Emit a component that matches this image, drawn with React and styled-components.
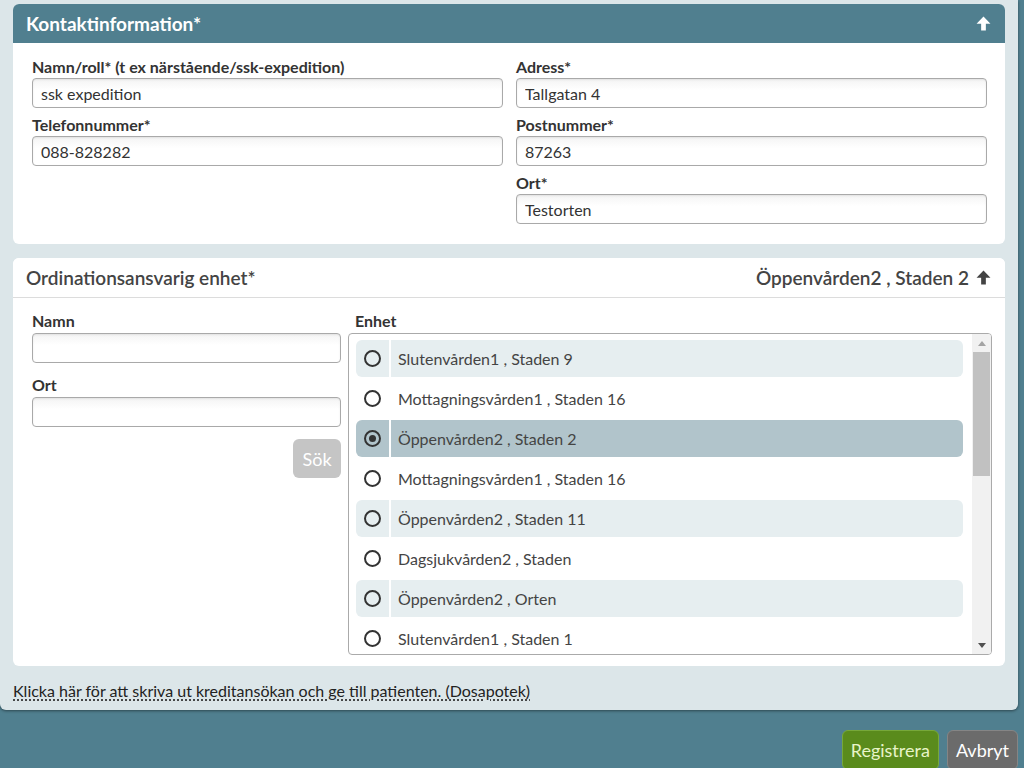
import styled, { createGlobalStyle } from "styled-components";

const units = [
  { name: "Slutenvården1 , Staden 9" },
  { name: "Mottagningsvården1 , Staden 16" },
  { name: "Öppenvården2 , Staden 2", selected: true },
  { name: "Mottagningsvården1 , Staden 16" },
  { name: "Öppenvården2 , Staden 11" },
  { name: "Dagsjukvården2 , Staden" },
  { name: "Öppenvården2 , Orten" },
  { name: "Slutenvården1 , Staden 1" },
];

const GlobalStyle = createGlobalStyle`
  html, body {
    margin: 0;
    background: #507f8f;
    font-family: Lato, "Open Sans", sans-serif;
    color: #333;
  }
  * { box-sizing: border-box; }
`;

const ArrowUp = () => (
  <svg viewBox="0 0 14 14" width="15" height="15">
    <path d="M7 0.5 L13.5 7.3 L9.2 7.3 L9.2 13.5 L4.8 13.5 L4.8 7.3 L0.5 7.3 Z" fill="currentColor" />
  </svg>
);

const App = () => {
  return (
    <>
      <GlobalStyle />
      <Page>
        <Panel>
          <Card>
            <CardHeader $dark>
              <CardTitle $dark>Kontaktinformation*</CardTitle>
              <HeaderRight $dark>
                <ArrowUp />
              </HeaderRight>
            </CardHeader>
            <ContactBody>
              <Column $gap="7px">
                <Field>
                  <Label>Namn/roll* (t ex närstående/ssk-expedition)</Label>
                  <Input defaultValue="ssk expedition" />
                </Field>
                <Field>
                  <Label>Telefonnummer*</Label>
                  <Input defaultValue="088-828282" />
                </Field>
              </Column>
              <Column $gap="7px">
                <Field>
                  <Label>Adress*</Label>
                  <Input defaultValue="Tallgatan 4" />
                </Field>
                <Field>
                  <Label>Postnummer*</Label>
                  <Input defaultValue="87263" />
                </Field>
                <Field>
                  <Label>Ort*</Label>
                  <Input defaultValue="Testorten" />
                </Field>
              </Column>
            </ContactBody>
          </Card>

          <Card>
            <CardHeader>
              <CardTitle>Ordinationsansvarig enhet*</CardTitle>
              <HeaderRight>
                Öppenvården2 , Staden 2
                <ArrowUp />
              </HeaderRight>
            </CardHeader>
            <UnitBody>
              <Column $gap="12px">
                <Field $gap="3px">
                  <Label>Namn</Label>
                  <Input />
                </Field>
                <Field $gap="3px">
                  <Label>Ort</Label>
                  <Input />
                </Field>
                <SearchRow>
                  <SearchButton disabled>Sök</SearchButton>
                </SearchRow>
              </Column>
              <Column $gap="3px">
                <Label $indent>Enhet</Label>
                <ListBox>
                  <ListItems>
                    {units.map((u, i) => (
                      <Item key={i} $odd={i % 2 === 0} $selected={u.selected}>
                        <RadioCell>
                          <Radio $checked={u.selected} />
                        </RadioCell>
                        <ItemText>{u.name}</ItemText>
                      </Item>
                    ))}
                  </ListItems>
                  <Scrollbar>
                    <ScrollArrow $up />
                    <Thumb />
                    <Track />
                    <ScrollArrow />
                  </Scrollbar>
                </ListBox>
              </Column>
            </UnitBody>
          </Card>

          <PrintLink>
            Klicka här för att skriva ut kreditansökan och ge till patienten.
            (Dosapotek)
          </PrintLink>
        </Panel>
        <Actions>
          <Button $variant="primary">Registrera</Button>
          <Button>Avbryt</Button>
        </Actions>
      </Page>
    </>
  );
};

const Page = styled.div`
  display: flex;
  flex-direction: column;
  padding-right: 6px;
`;

const Panel = styled.div`
  display: flex;
  flex-direction: column;
  gap: 14px;
  background: #dce6e9;
  border-radius: 0 0 6px 6px;
  box-shadow: 0 1px 3px rgba(0, 0, 0, 0.45);
  padding: 4px 13px 10px 13px;
`;

const Card = styled.section`
  background: #fff;
  border-radius: 6px;
  overflow: hidden;
`;

const CardHeader = styled.div`
  display: flex;
  align-items: center;
  justify-content: space-between;
  height: ${(p) => (p.$dark ? "39px" : "40px")};
  padding: 0 13px;
  background: ${(p) => (p.$dark ? "#507f8f" : "#fff")};
  border-bottom: ${(p) => (p.$dark ? "none" : "1px solid #dcdcdc")};
`;

const CardTitle = styled.h2`
  margin: 0;
  font-size: 19px;
  font-weight: ${(p) => (p.$dark ? 700 : 600)};
  color: ${(p) => (p.$dark ? "#fff" : "#444")};
`;

const HeaderRight = styled.div`
  display: flex;
  align-items: center;
  gap: 7px;
  font-size: 19px;
  font-weight: 600;
  color: ${(p) => (p.$dark ? "#fff" : "#444")};
  padding-right: 1px;
`;

const ContactBody = styled.div`
  display: grid;
  grid-template-columns: 1fr 1fr;
  column-gap: 13px;
  padding: 14px 18px 20px 19px;
`;

const UnitBody = styled.div`
  display: grid;
  grid-template-columns: 309px 1fr;
  column-gap: 7px;
  padding: 13px 13px 11px 19px;
`;

const Column = styled.div`
  display: flex;
  flex-direction: column;
  gap: ${(p) => p.$gap || "8px"};
  min-width: 0;
`;

const Field = styled.div`
  display: flex;
  flex-direction: column;
  gap: ${(p) => p.$gap || "2px"};
`;

const Label = styled.label`
  font-size: 16px;
  font-weight: 700;
  line-height: 19px;
  color: #333;
  padding-left: ${(p) => (p.$indent ? "7px" : "0")};
`;

const Input = styled.input`
  height: 30px;
  width: 100%;
  border: 1px solid #a9a9a9;
  border-radius: 4px;
  background: linear-gradient(#f4f4f4, #fff 40%);
  box-shadow: inset 0 1px 2px rgba(0, 0, 0, 0.08);
  padding: 0 8px;
  font-family: Lato, sans-serif;
  font-size: 16px;
  color: #333;
  outline: none;
`;

const SearchRow = styled.div`
  display: flex;
  justify-content: flex-end;
`;

const SearchButton = styled.button`
  width: 48px;
  height: 39px;
  border: none;
  border-radius: 6px;
  background: #c5c5c5;
  color: #fff;
  font-family: Lato, sans-serif;
  font-size: 18px;
`;

const ListBox = styled.div`
  display: flex;
  height: 322px;
  border: 1px solid #aaa;
  border-radius: 4px;
  overflow: hidden;
`;

const ListItems = styled.div`
  flex: 1;
  display: flex;
  flex-direction: column;
  gap: 3px;
  padding: 6px 9px 0 7px;
  overflow: hidden;
`;

const Item = styled.div`
  display: flex;
  align-items: stretch;
  flex: 0 0 37px;
  border-radius: 6px;
  background: ${(p) =>
    p.$selected ? "#b1c4cb" : p.$odd ? "#e6eef0" : "#fff"};
`;

const RadioCell = styled.div`
  width: 35px;
  display: flex;
  align-items: center;
  justify-content: center;
  border-right: 2px solid #fff;
`;

const Radio = styled.span`
  width: 17px;
  height: 17px;
  border-radius: 50%;
  border: 2px solid #333;
  display: flex;
  align-items: center;
  justify-content: center;
  &::after {
    content: "";
    width: 7px;
    height: 7px;
    border-radius: 50%;
    background: ${(p) => (p.$checked ? "#333" : "transparent")};
  }
`;

const ItemText = styled.span`
  display: flex;
  align-items: center;
  padding-left: 7px;
  font-size: 16px;
  color: #444;
`;

const Scrollbar = styled.div`
  width: 19px;
  display: flex;
  flex-direction: column;
  align-items: center;
  background: #f1f1f1;
  padding: 0 1px;
`;

const ScrollArrow = styled.div`
  flex: 0 0 18px;
  width: 100%;
  display: flex;
  align-items: center;
  justify-content: center;
  &::after {
    content: "";
    border-left: 4px solid transparent;
    border-right: 4px solid transparent;
    ${(p) =>
      p.$up
        ? "border-bottom: 5px solid #a3a3a3;"
        : "border-top: 5px solid #505050;"}
  }
`;

const Thumb = styled.div`
  flex: 0 0 124px;
  width: 100%;
  background: #c1c1c1;
`;

const Track = styled.div`
  flex: 1;
`;

const PrintLink = styled.a`
  align-self: flex-start;
  margin-top: 1px;
  font-size: 16px;
  color: #222;
  text-decoration: underline dotted;
  text-underline-offset: 3px;
  cursor: pointer;
`;

const Actions = styled.div`
  display: flex;
  justify-content: flex-end;
  gap: 8px;
  padding-top: 20px;
`;

const Button = styled.button`
  height: 40px;
  padding: 0 8px;
  border-radius: 6px;
  font-family: Lato, sans-serif;
  font-size: 18px;
  border: 1px solid
    ${(p) => (p.$variant === "primary" ? "#77a83a" : "#858585")};
  background: ${(p) => (p.$variant === "primary" ? "#5a8b1c" : "#6b6b6b")};
  color: ${(p) => (p.$variant === "primary" ? "#e8f4c9" : "#fff")};
`;

export default App;
